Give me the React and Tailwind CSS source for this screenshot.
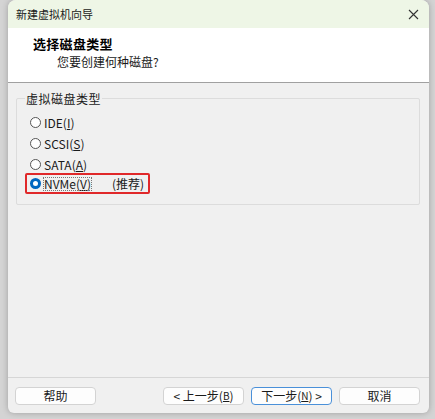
import * as React from "react"

const font = { fontFamily: '"Noto Sans CJK SC", "Noto Sans", sans-serif' }

const Radio = ({ checked }) => (
  <span
    className={`inline-block w-[11px] h-[11px] rounded-full shrink-0 ${
      checked ? "border-[3px] border-[#0067c0] bg-white" : "border border-[#555] bg-white"
    }`}
  />
)

const Option = ({ name, hot }) => (
  <div className="flex items-center h-[21px] pl-[13px] gap-[3px]">
    <Radio />
    <span className="text-[12px] text-[#1a1a1a] leading-none">
      {name}(<span className="underline">{hot}</span>)
    </span>
  </div>
)

const Button = ({ children, focused }) => (
  <button
    type="button"
    className={`w-[81px] h-[18px] rounded-[4px] bg-[#fdfdfd] text-[12px] leading-none text-[#1a1a1a] flex items-center justify-center border ${
      focused ? "border-[#4a90d9]" : "border-[#d3d3d3]"
    }`}
  >
    {children}
  </button>
)

export default function App() {
  return (
    <div className="w-[435px] h-[419px] bg-[#d4d4d4] pl-[8px]" style={font}>
      <div className="w-[421px] h-[413px] bg-[#f0f0f0] rounded-t-[8px] rounded-b-[6px] overflow-hidden flex flex-col shadow-[0_0_6px_rgba(0,0,0,0.25)]">
        {/* Title bar */}
        <div className="h-[28px] bg-[#eef6e6] flex items-center justify-between pl-[8px] pr-[10px]">
          <span className="text-[11px] text-[#1a1a1a]">新建虚拟机向导</span>
          <svg width="11" height="11" viewBox="0 0 11 11" className="text-[#333]">
            <path d="M1 1L10 10M10 1L1 10" stroke="currentColor" strokeWidth="1.1" />
          </svg>
        </div>

        {/* Header */}
        <div className="h-[55px] bg-white border-b border-[#a0a0a0] pt-[7px]">
          <div className="pl-[25px] text-[13px] font-bold leading-[18px] tracking-[0.3px] text-black">选择磁盘类型</div>
          <div className="pl-[49px] text-[12px] leading-[18px] text-[#1a1a1a]">您要创建何种磁盘?</div>
        </div>

        {/* Body */}
        <div className="flex-1 px-[8px] pt-[15px] flex flex-col">
          <div className="relative h-[107px] w-[404px] border border-[#dcdcdc] rounded-[2px] pt-[13px]">
            <span className="absolute -top-[8px] left-[8px] px-[1px] bg-[#f0f0f0] text-[12px] leading-[16px] tracking-[0.5px] text-[#1a1a1a]">
              虚拟磁盘类型
            </span>
            <Option name="IDE" hot="I" />
            <Option name="SCSI" hot="S" />
            <Option name="SATA" hot="A" />
            <div className="ml-[8px] mt-[-2px] w-[125px] h-[21px] border-2 border-[#e0282a] rounded-[2px] flex items-center pl-[3px] gap-[3px]">
              <Radio checked />
              <span className="text-[12px] leading-none text-[#1a1a1a] outline-1 outline-dotted outline-[#777]">
                NVMe(<span className="underline">V</span>)
              </span>
              <span className="ml-[18px] text-[12px] leading-none text-[#1a1a1a]">(推荐)</span>
            </div>
          </div>
        </div>

        {/* Footer */}
        <div className="border-t border-[#d6d6d6] h-[36px] flex items-start pt-[9px] pl-[7px] pr-[9px]">
          <Button>帮助</Button>
          <div className="flex-1" />
          <div className="flex gap-[7px]">
            <Button>
              &lt; 上一步(<span className="underline text-[10px]">B</span>)
            </Button>
            <Button focused>
              下一步(<span className="underline text-[10px]">N</span>) &gt;
            </Button>
            <Button>取消</Button>
          </div>
        </div>
      </div>
    </div>
  )
}
